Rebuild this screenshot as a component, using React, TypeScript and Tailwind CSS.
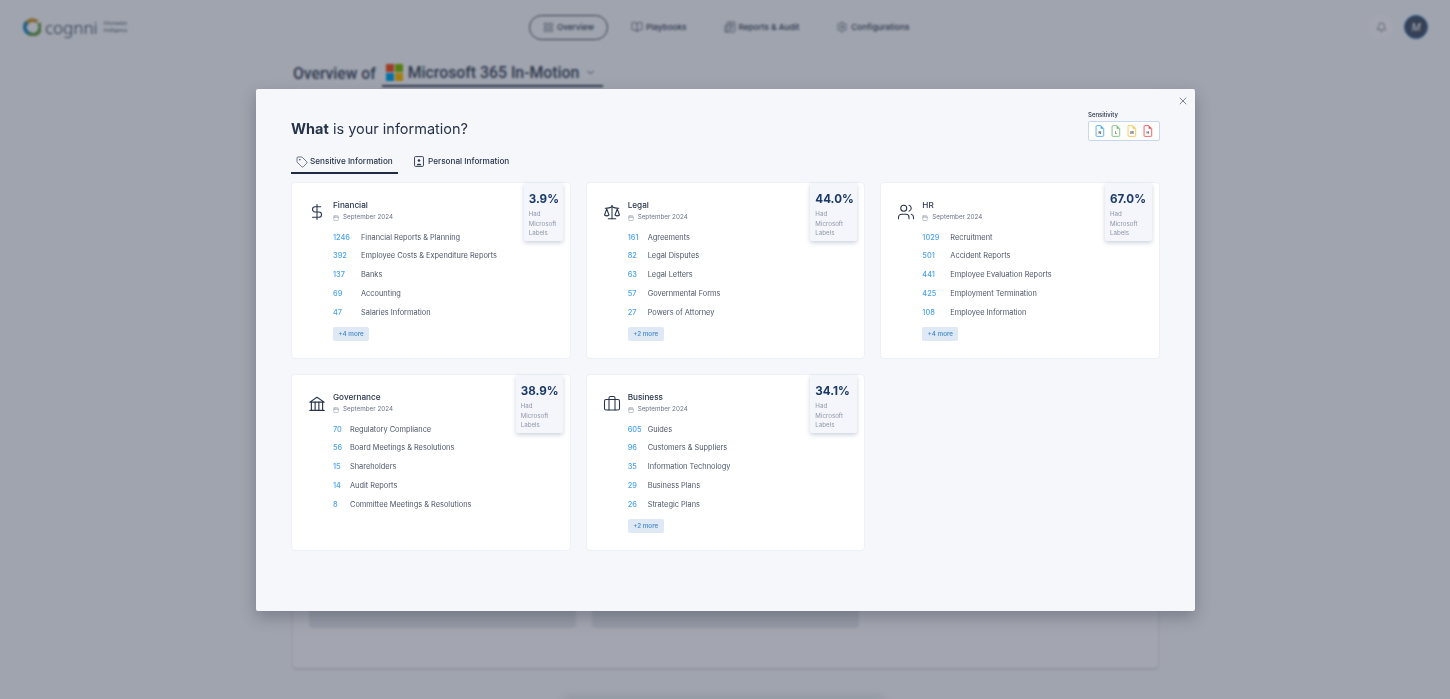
import React from "react";
import { BookOpen, Newspaper, Settings, Bell, ChevronDown, X, Tag, Calendar, DollarSign, Scale, Users, Briefcase, LayoutGrid } from "lucide-react";

type Row = [string, string];
type CardData = {
  title: string;
  pct: string;
  icon: React.ReactNode;
  rows: Row[];
  more?: string;
  numCol: string;
  badge: string;
};

function Bank() {
  return (
    <svg viewBox="0 0 24 24" width="22" height="22" fill="none" stroke="#27344a" strokeWidth="1.5" strokeLinejoin="round" strokeLinecap="round">
      <path d="M2.5 9.5 12 3l9.5 6.5z" />
      <path d="M4.5 9.5V20M19.5 9.5V20M9.5 9.5V20M14.5 9.5V20M2.5 20.5h19" />
    </svg>
  );
}

const iconProps = { size: 20, color: "#27344a", strokeWidth: 1.4 };

const cards: CardData[] = [
  {
    title: "Financial", pct: "3.9%", icon: <DollarSign {...iconProps} />, numCol: "w-[28px]", badge: "w-[39px]", more: "+4 more",
    rows: [["1246", "Financial Reports & Planning"], ["392", "Employee Costs & Expenditure Reports"], ["137", "Banks"], ["69", "Accounting"], ["47", "Salaries Information"]],
  },
  {
    title: "Legal", pct: "44.0%", icon: <Scale {...iconProps} />, numCol: "w-[20px]", badge: "w-[47px]", more: "+2 more",
    rows: [["161", "Agreements"], ["82", "Legal Disputes"], ["63", "Legal Letters"], ["57", "Governmental Forms"], ["27", "Powers of Attorney"]],
  },
  {
    title: "HR", pct: "67.0%", icon: <Users {...iconProps} />, numCol: "w-[28px]", badge: "w-[47px]", more: "+4 more",
    rows: [["1029", "Recruitment"], ["501", "Accident Reports"], ["441", "Employee Evaluation Reports"], ["425", "Employment Termination"], ["108", "Employee Information"]],
  },
  {
    title: "Governance", pct: "38.9%", icon: <Bank />, numCol: "w-[17px]", badge: "w-[47px]",
    rows: [["70", "Regulatory Compliance"], ["56", "Board Meetings & Resolutions"], ["15", "Shareholders"], ["14", "Audit Reports"], ["8", "Committee Meetings & Resolutions"]],
  },
  {
    title: "Business", pct: "34.1%", icon: <Briefcase {...iconProps} />, numCol: "w-[20px]", badge: "w-[47px]", more: "+2 more",
    rows: [["605", "Guides"], ["96", "Customers & Suppliers"], ["35", "Information Technology"], ["29", "Business Plans"], ["26", "Strategic Plans"]],
  },
];

function InfoCard({ c }: { c: CardData }) {
  return (
    <div className="relative h-[177px] rounded-[4px] border border-[#edf0f6] bg-white pl-[16px] pt-[17px]">
      <div className={`absolute right-[7px] top-0 h-[58px] ${c.badge} rounded-b-[2px] bg-[#f4f6fb] pl-[5px] pt-[7px] shadow-[0_2px_4px_rgba(60,80,120,0.25)]`}>
        <div className="text-[11.6px] font-bold leading-[18px] text-[#1b3a6b]">{c.pct}</div>
        <div className="mt-[1px] text-[6.2px] leading-[9.5px] text-[#8e97a8]">Had<br />Microsoft<br />Labels</div>
      </div>
      <div className="flex items-center">
        <div className="flex w-[18px] shrink-0 items-center justify-center">{c.icon}</div>
        <div className="ml-[7px]">
          <div className="text-[8.2px] font-medium leading-[11px] text-[#27344a]">{c.title}</div>
          <div className="flex items-center gap-[4px] text-[6.3px] leading-[13px] text-[#6b7486]">
            <Calendar size={6} strokeWidth={1.5} />
            <span>September 2024</span>
          </div>
        </div>
      </div>
      <div className="ml-[25px] mt-[4px] flex flex-col">
        {c.rows.map(([n, t]) => (
          <div key={t} className="flex h-[18.7px] items-center text-[7.4px]">
            <span className={`${c.numCol} shrink-0 font-medium text-[#4aa3f0]`}>{n}</span>
            <span className="text-[#4d5768]">{t}</span>
          </div>
        ))}
        {c.more && (
          <div className="mt-[6px] flex h-[14px] w-[36px] items-center justify-center rounded-[2px] bg-[#dfe9f6] text-[6.3px] font-medium text-[#3f86c8]">{c.more}</div>
        )}
      </div>
    </div>
  );
}

function FileIcon({ color, letter }: { color: string; letter: string }) {
  return (
    <svg viewBox="0 0 8 11" width="10" height="12">
      <path d="M1.2.6h3.6l2.6 2.6v6.4a.8.8 0 0 1-.8.8H1.2a.8.8 0 0 1-.8-.8V1.4a.8.8 0 0 1 .8-.8z" fill="#fff" stroke={color} strokeWidth="0.8" />
      <path d="M4.6.6v2.8h2.8z" fill={color} />
      <text x="4" y="8.6" fontSize="3.4" textAnchor="middle" fill="#555" fontWeight="700">{letter}</text>
    </svg>
  );
}

function Logo() {
  return (
    <div className="flex items-center">
      <svg viewBox="0 0 24 24" width="18" height="18" fill="none" strokeWidth="5">
        <path d="M4 9.5A9 9 0 0 1 19 5.5" stroke="#c89a35" />
        <path d="M5 5.5A9.5 9.5 0 0 0 9 21" stroke="#2e8fc0" />
        <path d="M8 20.5A9.5 9.5 0 0 0 21 7" stroke="#67a04a" />
      </svg>
      <span className="ml-[4px] text-[17px] font-light leading-none text-[#3f4b60] [font-family:'Noto_Sans',sans-serif]">cognni</span>
      <div className="ml-[6px] text-[4.4px] leading-[7px] text-[#4d586c]">Information<br />Intelligence</div>
    </div>
  );
}

function NavItem({ icon, label, active, className }: { icon: React.ReactNode; label: string; active?: boolean; className?: string }) {
  return (
    <div className={`flex h-[25px] items-center gap-[3px] ${active ? "w-[79px] justify-center rounded-full border border-[#4a5568]" : ""} ${className ?? ""}`}>
      {icon}
      <span className="text-[8.2px] font-medium text-[#3f4b60]">{label}</span>
    </div>
  );
}

export default function App() {
  const navIcon = { color: "#3f4b60", strokeWidth: 1.3 };
  return (
    <div className="relative h-[699px] w-full overflow-hidden bg-[#f5f7fb] [font-family:Inter,sans-serif]">
      {/* page behind */}
      <header className="flex h-[54px] items-center justify-between pl-[23px] pr-[22px]">
        <div className="w-[506px]"><Logo /></div>
        <nav className="flex flex-1 items-center">
          <NavItem active icon={<LayoutGrid size={11} {...navIcon} />} label="Overview" />
          <NavItem className="ml-[23px]" icon={<BookOpen size={12} {...navIcon} />} label="Playbooks" />
          <NavItem className="ml-[37px]" icon={<Newspaper size={12} {...navIcon} />} label="Reports & Audit" />
          <NavItem className="ml-[37px]" icon={<Settings size={12} {...navIcon} />} label="Configurations" />
        </nav>
        <div className="flex items-center gap-[11px]">
          <div className="flex h-[24px] w-[24px] items-center justify-center rounded-full bg-[#fafbfd]"><Bell size={11} {...navIcon} /></div>
          <div className="flex h-[24px] w-[24px] items-center justify-center rounded-full border border-[#3b82c4] bg-[#4b576c] text-[10px] italic text-white">M</div>
        </div>
      </header>
      <main className="ml-[293px] w-[865px]">
        <div className="flex h-[33px] items-end [font-family:Roboto,sans-serif]">
          <span className="mb-[3px] text-[15.7px] font-medium leading-[20px] text-[#3f4b60]">Overview of</span>
          <div className="ml-[6px] flex h-[33px] w-[221px] items-center gap-[5px] border-b-2 border-[#3f4b60] pl-[4px] pt-[6px]">
            <svg width="17" height="17" viewBox="0 0 17 17"><rect width="8" height="8" fill="#f25022" /><rect x="9" width="8" height="8" fill="#7fba00" /><rect y="9" width="8" height="8" fill="#00a4ef" /><rect x="9" y="9" width="8" height="8" fill="#ffb900" /></svg>
            <span className="text-[15.8px] font-medium text-[#3f4b60]">Microsoft 365 In-Motion</span>
            <ChevronDown size={11} color="#3f4b60" className="ml-[1px]" />
          </div>
        </div>
        <div className="flex h-[581px] gap-[16px] rounded-[4px] bg-[#fafbfd] px-[16px] pb-[40px] shadow-[0_1px_2px_rgba(0,0,0,0.2)]">
          <div className="mt-auto h-[60px] w-[267px] rounded-[3px] bg-[#e4e7ec]" />
          <div className="mt-auto h-[60px] w-[267px] rounded-[3px] bg-[#e4e7ec]" />
        </div>
        <div className="ml-[270px] mt-[29px] h-[8px] w-[320px] bg-[#d9dde4] blur-[4px]" />
      </main>

      {/* overlay */}
      <div className="absolute inset-0 bg-[rgba(20,30,50,0.38)] backdrop-blur-[1px]" />

      {/* dialog */}
      <div className="absolute left-[256px] top-[89px] h-[522px] w-[939px] rounded-[2px] bg-[#f5f7fb] px-[35px] pt-[30px] shadow-[0_6px_16px_rgba(30,40,60,0.3)]">
        <X size={12} color="#3d4757" strokeWidth={1.3} className="absolute right-[6px] top-[6px]" />
        <div className="absolute left-[832px] top-[21px] w-[72px]">
          <div className="text-[6px] font-medium leading-[9px] text-[#27344a]">Sensitivity</div>
          <div className="mt-[2px] flex h-[20px] items-center justify-center gap-[6px] rounded-[2px] border border-[#c8d7ee] bg-white">
            <FileIcon color="#4aa3f0" letter="N" />
            <FileIcon color="#72bd73" letter="L" />
            <FileIcon color="#f5c344" letter="M" />
            <FileIcon color="#ee4d4d" letter="H" />
          </div>
        </div>
        <h2 className="h-[20px] text-[14.5px] font-normal leading-[20px] text-[#27344a]"><span className="font-bold">What</span> is your information?</h2>
        <div className="mt-[14px] flex h-[21px] items-start">
          <div className="flex h-[21px] w-[107px] items-center gap-[2px] border-b-2 border-[#1f2d44] pb-[2px] pl-[5px]">
            <Tag size={12} color="#27344a" strokeWidth={1.3} />
            <span className="text-[8.2px] font-medium leading-[13px] text-[#27344a]">Sensitive Information</span>
          </div>
          <div className="ml-[16px] flex h-[17px] items-center gap-[4px]">
            <svg viewBox="0 0 11 12" width="10" height="11" fill="none"><rect x=".6" y=".6" width="9.8" height="10.8" rx="1" stroke="#27344a" strokeWidth="1" /><circle cx="5.5" cy="5" r="1.4" fill="#27344a" /><path d="M3 10c.2-2 4.8-2 5 0z" fill="#27344a" /></svg>
            <span className="text-[8.2px] font-medium leading-[13px] text-[#27344a]">Personal Information</span>
          </div>
        </div>
        <div className="mt-[8px] grid grid-cols-3 gap-x-[15px] gap-y-[15px]">
          {cards.map((c) => <InfoCard key={c.title} c={c} />)}
        </div>
      </div>
    </div>
  );
}
